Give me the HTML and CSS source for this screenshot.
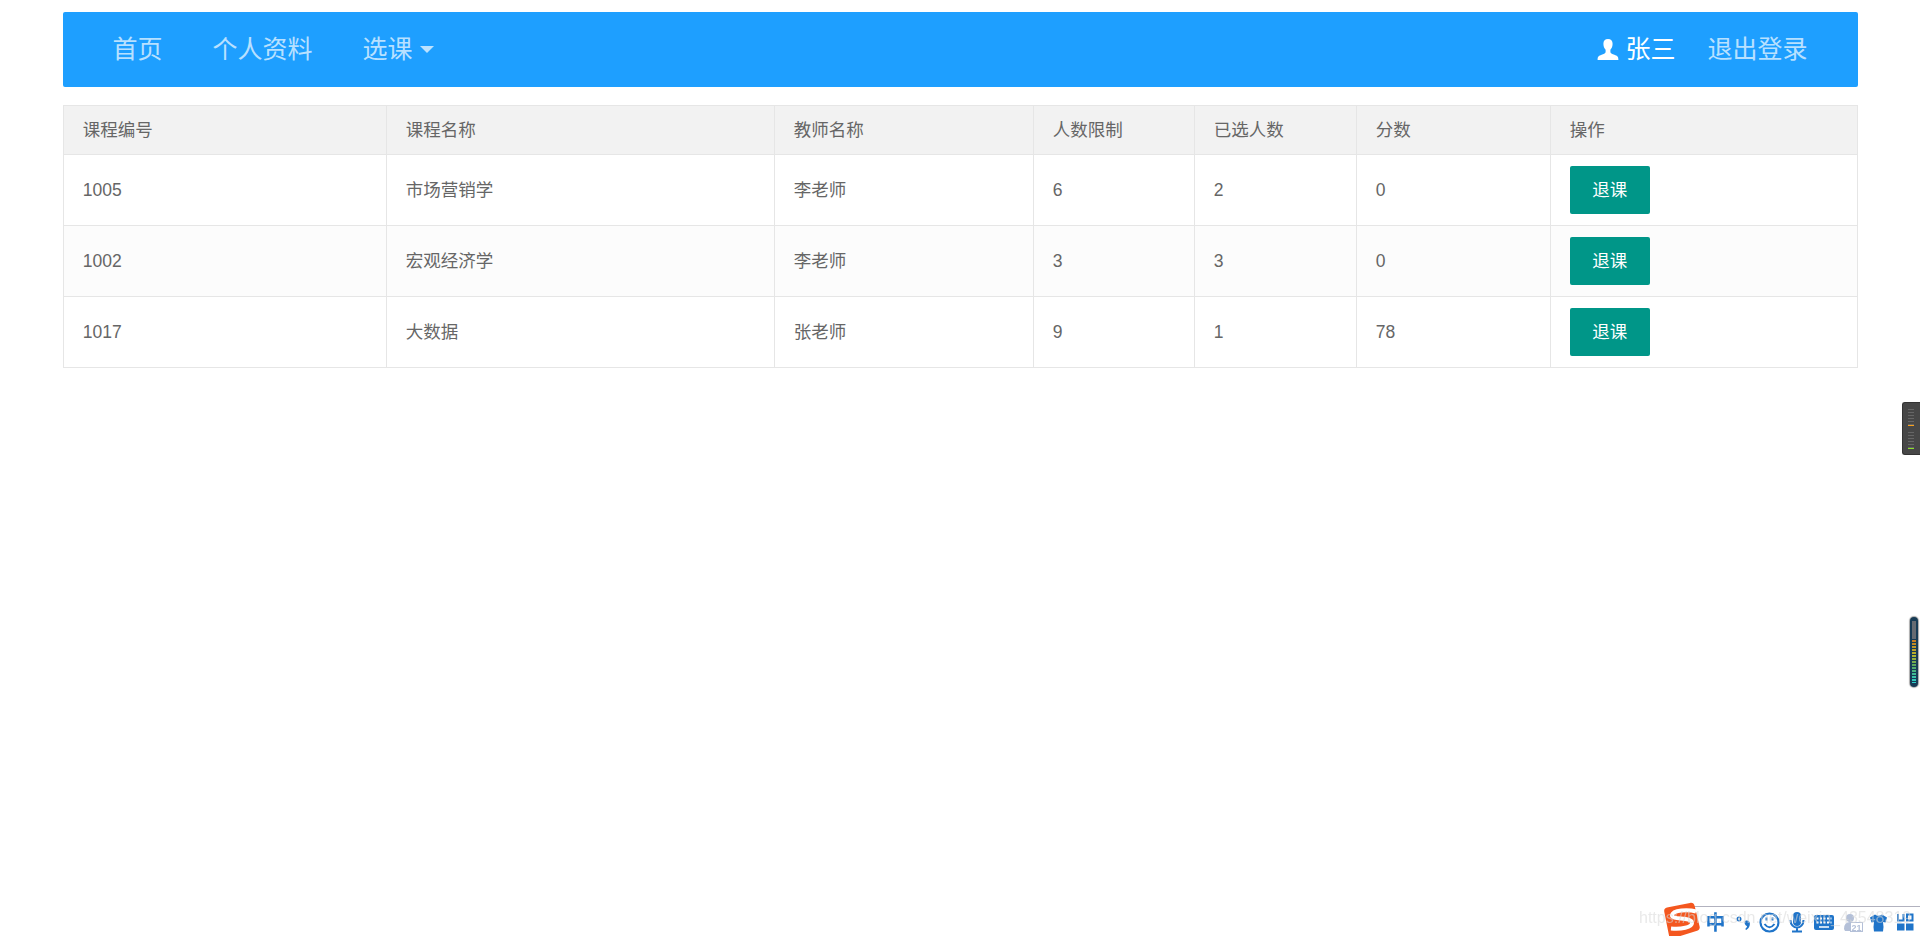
FILE: index.html
```html
<!DOCTYPE html>
<html lang="zh-CN">
<head>
    <meta charset="UTF-8">
    <title>选课</title>
    <link rel="stylesheet" href="styles.css">
</head>
<body>
    <ul class="nav">
        <li><a href="#">首页</a></li>
        <li><a href="#">个人资料</a></li>
        <li><a href="#">选课<span class="nav-more"></span></a></li>
        <li class="nav-user">
            <a href="#">
                <svg class="icon-user" width="22" height="21" viewBox="0 0 22 21"><path d="M11 0c3 0 4.600 2 4.600 4.800 0 2.600-.8 4.600-2.200 6v2.400c.4 1.300 2 1.700 4 2.500 3 1.200 4 1.500 4 5.300H.6c0-3.800 1-4.100 4-5.300 2-.8 3.600-1.200 4-2.500v-2.400c-1.400-1.400-2.200-3.400-2.200-6C6.400 2 8 0 11 0z" fill="#fff"/></svg>张三</a>
        </li>
        <li class="nav-logout"><a href="#">退出登录</a></li>
    </ul>

    <table class="table">
        <colgroup>
            <col class="col-id"><col class="col-name"><col class="col-teacher"><col class="col-limit"><col class="col-count"><col class="col-score"><col>
        </colgroup>
        <thead>
            <tr><th>课程编号</th><th>课程名称</th><th>教师名称</th><th>人数限制</th><th>已选人数</th><th>分数</th><th>操作</th></tr>
        </thead>
        <tbody>
            <tr><td>1005</td><td>市场营销学</td><td>李老师</td><td>6</td><td>2</td><td>0</td><td><button class="btn">退课</button></td></tr>
            <tr><td>1002</td><td>宏观经济学</td><td>李老师</td><td>3</td><td>3</td><td>0</td><td><button class="btn">退课</button></td></tr>
            <tr><td>1017</td><td>大数据</td><td>张老师</td><td>9</td><td>1</td><td>78</td><td><button class="btn">退课</button></td></tr>
        </tbody>
    </table>

    <div class="meter-box">
        <div class="meter orange"></div>
        <div class="meter green"></div>
    </div>
    <div class="level-bar"><div class="level-off"></div><div class="level-on"></div></div>

    <div class="ime-bar">
        <svg width="260" height="36" viewBox="1660 900 260 36">
            <path d="M1692 906.500H1920" stroke="#b2b2bf"/>
            <path d="M1667 907.500l23-4.500c2.500-.5 4 .5 4.600 2.800l5 20.700c.5 2-.5 3.500-2.500 4.200L1674 938c-2.500.8-4.500 0-5-2.500l-4.700-23.500c-.5-2.500.5-4 2.700-4.500z" fill="#f4571f"/>
            <path d="M1696 911.500c-8-2.500-23-1.500-24 3.500-1 5.500 20 1.500 20 8 0 4.500-11 6.500-21 5.500" fill="none" stroke="#fff" stroke-width="4"/>
            <text class="ime-lang" x="1705.500" y="929.500">中</text>
            <g fill="none" stroke="#1f74c9" stroke-width="2.500">
                <circle cx="1739" cy="919" r="1.700" stroke-width="1.600"/>
                <circle cx="1769.500" cy="922.500" r="9" stroke-width="2.200"/>
                <path d="M1764.500 924q5 6.500 10 0M1766.500 917.500v3M1772.500 917.500v3" stroke-width="2"/>
                <path d="M1790.500 920c0 10 13 10 13 0M1797 927v5M1792 931.500h10" stroke-width="2"/>
            </g>
            <g fill="#1f74c9">
                <path d="M1745 921c3-1.500 5.500.5 4.800 4-.4 2-1.800 4-3.600 5l-1-1c1.200-1 1.800-2 1.800-3-2-.5-3-3.500-2-5z"/>
                <rect x="1793" y="912" width="8" height="14" rx="4"/>
                <rect x="1814" y="915" width="20" height="15" rx="2"/>
                <path d="M1870 917.500l5-3q3.500 2.500 7 0l5 3-1.500 5-2.500-.5q1 5 0 9.500h-9q-1-4.500 0-9.500l-2.500.5z"/>
                <path d="M1897 923.500h7.500v7h-7.500zM1906 923.500h7.500v7h-7.500z"/>
            </g>
            <path d="M1898 914v6.500h5.500V914M1907 914.500h5.500v6h-5.500z" fill="none" stroke="#1f74c9" stroke-width="2"/>
            <path d="M1816.500 918.500h15M1816.500 922.500h15" stroke="#fff" stroke-width="2" stroke-dasharray="2 1.500"/>
            <path d="M1819 927h10" stroke="#fff" stroke-width="1.500"/>
            <g fill="#b4c0d8"><circle cx="1850" cy="918" r="4"/><path d="M1844 929q0-7 6-7h2v9h-7z"/></g>
            <rect x="1850.500" y="922.500" width="12" height="9" fill="#fff" stroke="#b4c0d8"/>
            <text class="ime-num" x="1851.500" y="930.500">21</text>
        </svg>
    </div>
    <div class="watermark">https://blog.csdn.net/weixin_43548319</div>
</body>
</html>
```
FILE: styles.css
```css
body {
    margin: 0;
    padding: 12px 62px 0 63px;
    height: 936px;
    box-sizing: border-box;
    overflow: hidden;
    background: #fff;
    color: #666;
    font-family: "Liberation Sans", "Noto Sans CJK SC", sans-serif;
    font-size: 17.5px;
}
.nav {
    display: flex;
    height: 75px;
    margin: 0 0 18px;
    padding: 0 25px 0 24.5px;
    list-style: none;
    border-radius: 2px;
    background: #1E9FFF;
    font-size: 25px;
    line-height: 75px;
}
.nav a {
    display: flex;
    align-items: center;
    padding: 0 25px;
    color: rgba(255,255,255,.7);
    text-decoration: none;
}
.nav-more {
    margin-left: 7px;
    border: 7px solid transparent;
    border-top-color: rgba(255,255,255,.7);
    border-bottom: 0;
}
.nav-user {
    margin-left: auto;
}
.nav .nav-user a {
    padding-right: 7px;
    color: #fff;
}
.nav .nav-logout a {
    padding-right: 25.5px;
}
.icon-user {
    margin-right: 6px;
}
.table {
    width: 1795px;
    table-layout: fixed;
    border-collapse: collapse;
    line-height: 25px;
}
.col-id { width: 323px; }
.col-name { width: 388px; }
.col-teacher { width: 259px; }
.col-limit { width: 161px; }
.col-count { width: 162px; }
.col-score { width: 194px; }
.table th,
.table td {
    height: 70px;
    padding: 0 18.75px;
    border: 1px solid #e6e6e6;
    text-align: left;
    font-weight: 400;
}
.table th {
    height: 48px;
    background: #f2f2f2;
}
.table tbody tr:nth-child(even) {
    background: #fcfcfc;
}
.btn {
    display: block;
    width: 80px;
    height: 48px;
    padding: 0;
    border: none;
    border-radius: 2px;
    background: #009688;
    color: #fff;
    font: inherit;
}
/* 右侧音量条 */
.meter-box {
    position: fixed;
    right: 0;
    top: 402px;
    width: 18px;
    height: 53px;
    padding: 6px 0 0 5px;
    box-sizing: border-box;
    border: 1px solid #333;
    border-right: 0;
    border-radius: 3px 0 0 3px;
    background: #474747;
}
.meter {
    width: 6px;
    height: 16px;
    margin-bottom: 6px;
    background: repeating-linear-gradient(#666 0 1px, #474747 1px 3px);
}
.orange { border-bottom: 1px solid #f9a01b; }
.green { border-bottom: 1px solid #8be02b; }
.level-bar {
    position: fixed;
    left: 1910px;
    top: 617px;
    width: 8px;
    height: 70px;
    padding: 4px 2px;
    box-sizing: border-box;
    border-radius: 4px;
    background: #173b55;
    box-shadow: 0 0 1px 1px #aaa;
}
.level-off {
    height: 18px;
    background: #666b72;
}
.level-on {
    height: 43px;
    margin-top: 1px;
    background: repeating-linear-gradient(transparent 0 2px, #173b55 2px 3px), linear-gradient(#c77a22, #b5b52c 35%, #55a860 60%, #29d0cd);
}
/* 输入法状态栏 */
.ime-bar {
    position: fixed;
    right: 0;
    bottom: 0;
    height: 36px;
}
.ime-lang {
    font: 700 20px "Noto Sans CJK SC", sans-serif;
    fill: #1f74c9;
}
.ime-num {
    font: 700 9px "Liberation Sans", sans-serif;
    fill: #b4c0d8;
}
.watermark {
    position: fixed;
    left: 1639px;
    top: 908px;
    font-size: 16px;
    line-height: 20px;
    white-space: nowrap;
    color: rgba(215,215,215,.55);
}
```
